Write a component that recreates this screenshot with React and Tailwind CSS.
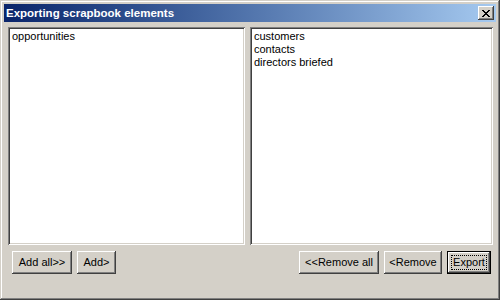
export default function App() {
  const font = { fontFamily: '"Liberation Sans", Arial, sans-serif' };
  const btn =
    "h-[23px] px-[6px] text-[11px] text-black bg-[#d4d0c8] shadow-[inset_-1px_-1px_#404040,inset_1px_1px_#ffffff,inset_-2px_-2px_#808080,inset_2px_2px_#d4d0c8] flex items-center justify-center";
  const list =
    "bg-white shadow-[inset_1px_1px_#808080,inset_-1px_-1px_#ffffff,inset_2px_2px_#404040,inset_-2px_-2px_#d4d0c8] pt-[3px] pl-[4px] text-[11px] leading-[13px] text-black";
  return (
    <div
      style={font}
      className="w-[500px] h-[300px] bg-[#d4d0c8] p-[4px] flex flex-col shadow-[inset_-1px_-1px_#404040,inset_1px_1px_#d4d0c8,inset_-2px_-2px_#808080,inset_2px_2px_#ffffff]"
    >
      <div className="h-[18px] flex items-center justify-between bg-gradient-to-r from-[#0a246a] to-[#a6caf0] pl-[2px] pr-[2px]">
        <span className="text-white font-bold text-[11.5px] leading-[18px]">Exporting scrapbook elements</span>
        <div className="w-[16px] h-[14px] bg-[#d4d0c8] shadow-[inset_-1px_-1px_#404040,inset_1px_1px_#ffffff,inset_-2px_-2px_#808080,inset_2px_2px_#d4d0c8] flex items-center justify-center">
          <svg width="8" height="7" viewBox="0 0 8 7">
            <path d="M0 0h2v1h-2zM6 0h2v1h-2zM1 1h2v1h-2zM5 1h2v1h-2zM2 2h4v1h-4zM3 3h2v1h-2zM2 4h4v1h-4zM1 5h2v1h-2zM5 5h2v1h-2zM0 6h2v1h-2zM6 6h2v1h-2z" fill="#000" />
          </svg>
        </div>
      </div>
      <div className="flex gap-[5px] pl-[4px] mt-[5px] h-[218px]">
        <div className={list + " w-[237px]"}>
          <div>opportunities</div>
        </div>
        <div className={list + " w-[243px]"}>
          <div>customers</div>
          <div>contacts</div>
          <div>directors briefed</div>
        </div>
      </div>
      <div className="flex justify-between mt-[6px] px-[8px] pr-[5px]">
        <div className="flex gap-[5px]">
          <div className={btn + " w-[60px]"}>Add all&gt;&gt;</div>
          <div className={btn + " w-[39px]"}>Add&gt;</div>
        </div>
        <div className="flex gap-[5px]">
          <div className={btn + " w-[80px]"}>&lt;&lt;Remove all</div>
          <div className={btn + " w-[58px]"}>&lt;Remove</div>
          <div className="w-[44px] h-[23px] bg-black p-[1px] flex">
            <div className="flex-1 bg-[#d4d0c8] shadow-[inset_-1px_-1px_#404040,inset_1px_1px_#ffffff,inset_-2px_-2px_#808080,inset_2px_2px_#d4d0c8] p-[3px] flex">
              <div className="flex-1 border border-dotted border-black flex items-center justify-center text-[11px]">Export</div>
            </div>
          </div>
        </div>
      </div>
    </div>
  );
}
